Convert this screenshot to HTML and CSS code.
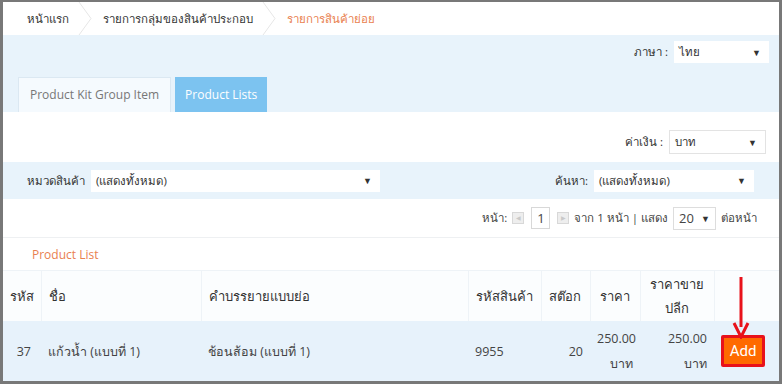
FILE: index.html
```html
<!DOCTYPE html>
<html lang="th">
<head>
    <meta charset="UTF-8">
    <title>รายการสินค้าย่อย</title>
    <link rel="stylesheet" href="styles.css">
</head>
<body>
<div class="frame">

    <!-- breadcrumb -->
    <div class="crumbs">
        <span class="crumb">หน้าแรก</span>
        <svg class="sep" width="16" height="33" viewBox="0 0 16 33"><path d="M2 0 L14 16.5 L2 33" fill="none" stroke="#e6e6e6" stroke-width="1"/></svg>
        <span class="crumb">รายการกลุ่มของสินค้าประกอบ</span>
        <svg class="sep" width="16" height="33" viewBox="0 0 16 33"><path d="M2 0 L14 16.5 L2 33" fill="none" stroke="#e6e6e6" stroke-width="1"/></svg>
        <span class="crumb active">รายการสินค้าย่อย</span>
    </div>

    <!-- language + tabs -->
    <div class="head">
        <div class="lang">
            <label>ภาษา :</label>
            <div class="sel sel-lang">ไทย <span class="caret">▼</span></div>
        </div>
        <div class="tabs">
            <div class="tab">Product Kit Group Item</div>
            <div class="tab on">Product Lists</div>
        </div>
    </div>

    <div class="currency">
        <label>ค่าเงิน :</label>
        <div class="sel sel-cur">บาท <span class="caret">▼</span></div>
    </div>

    <div class="filter">
        <div class="fgroup">
            <label>หมวดสินค้า</label>
            <div class="sel sel-cat">(แสดงทั้งหมด) <span class="caret">▼</span></div>
        </div>
        <div class="fgroup">
            <label>ค้นหา:</label>
            <div class="sel sel-find">(แสดงทั้งหมด) <span class="caret">▼</span></div>
        </div>
    </div>

    <div class="pager">
        <span>หน้า:</span>
        <span class="pbtn">&#9664;</span>
        <span class="pnum">1</span>
        <span class="pbtn">&#9654;</span>
        <span>จาก 1 หน้า | แสดง</span>
        <div class="sel sel-per">20 <span class="caret">▼</span></div>
        <span>ต่อหน้า</span>
    </div>

    <div class="list-title">Product List</div>

    <table class="grid">
        <tr>
            <th class="c-id">รหัส</th>
            <th class="c-name">ชื่อ</th>
            <th class="c-desc">คำบรรยายแบบย่อ</th>
            <th class="c-code">รหัสสินค้า</th>
            <th class="c-stock">สต๊อก</th>
            <th class="c-price">ราคา</th>
            <th class="c-retail">ราคาขาย<br>ปลีก</th>
            <th class="c-act"></th>
        </tr>
        <tr>
            <td class="num first">37</td>
            <td>แก้วน้ำ (แบบที่ 1)</td>
            <td>ช้อนส้อม (แบบที่ 1)</td>
            <td>9955</td>
            <td class="num">20</td>
            <td class="num">250.00<br>บาท</td>
            <td class="num">250.00<br>บาท</td>
            <td class="act"><span class="add">Add</span></td>
        </tr>
    </table>

    <!-- annotation arrow pointing at Add -->
    <svg class="arrow" width="20" height="62" viewBox="0 0 20 62">
        <line x1="10" y1="0" x2="10" y2="50" stroke="#e8121b" stroke-width="3"/>
        <path d="M3 46 L10 60 L17 46" fill="none" stroke="#e8121b" stroke-width="3" stroke-linejoin="miter"/>
    </svg>
</div>
</body>
</html>
```
FILE: styles.css
```css
* {
    box-sizing: border-box;
}
body {
    margin: 0;
    font-family: "Open Sans", "Noto Sans", sans-serif;
    font-size: 11.5px;
    color: #333;
    background: #fff;
}
.frame {
    position: relative;
    width: 782px;
    height: 384px;
    border: 3px solid #787878;
    border-top-width: 2px;
    overflow: hidden;
}
.crumbs {
    display: flex;
    align-items: center;
    height: 33px;
    padding-left: 24px;
    font-size: 11.5px;
}
.sep {
    margin: 0 10px 0 8px;
}
.crumb.active {
    color: #e9804f;
}
.head {
    background: #e8f3fb;
    height: 77px;
    display: flex;
    flex-direction: column;
    justify-content: space-between;
}
.lang {
    display: flex;
    justify-content: flex-end;
    align-items: center;
    padding: 6px 10px 0 0;
}
label {
    margin-right: 6px;
}
.sel {
    background: #fff;
    height: 22px;
    display: flex;
    align-items: center;
    justify-content: space-between;
    padding: 0 8px 0 5px;
    font-size: 11.5px;
}
.caret {
    font-size: 9px;
    color: #333;
}
.sel-lang { width: 95px; }
.sel-cur { width: 97px; height: 24px; border: 1px solid #e3e3e3; }
.sel-cat { width: 289px; }
.sel-find { width: 160px; }
.sel-per { width: 43px; height: 23px; border: 1px solid #ddd; padding: 0 5px; font-size: 13px; }
.tabs {
    display: flex;
    padding-left: 15px;
    gap: 4px;
}
.tab {
    height: 35px;
    line-height: 34px;
    padding: 0 11px;
    font-size: 12px;
    color: #777;
    background: #f5fafe;
    border: 1px solid #dbe8f2;
    border-bottom: none;
}
.tab.on {
    background: #7cc3f0;
    color: #fff;
    border-color: #7cc3f0;
    padding: 0 9px;
}
.currency {
    height: 50px;
    display: flex;
    justify-content: flex-end;
    align-items: center;
    padding: 10px 13px 0 0;
}
.filter {
    height: 37px;
    background: #e8f3fb;
    display: flex;
    align-items: center;
    justify-content: space-between;
    padding: 0 25px 0 24px;
}
.fgroup {
    display: flex;
    align-items: center;
}
.pager {
    height: 39px;
    display: flex;
    justify-content: flex-end;
    align-items: center;
    gap: 5px;
    padding-right: 22px;
    border-bottom: 1px solid #eef0f2;
    color: #444;
}
.pbtn {
    width: 12px;
    height: 12px;
    border: 1px solid #d8d8d8;
    background: #eee;
    color: #c9c9c9;
    font-size: 6px;
    display: flex;
    align-items: center;
    justify-content: center;
}
.pnum {
    width: 19px;
    height: 22px;
    border: 1px solid #d8d8d8;
    display: flex;
    align-items: center;
    padding-left: 5px;
    margin: 0 2px;
    font-size: 13px;
}
.list-title {
    color: #e9804f;
    font-size: 12px;
    padding: 8px 0 0 29px;
    height: 32px;
}
.grid {
    border-collapse: collapse;
    width: 776px;
    table-layout: fixed;
    font-size: 13px;
}
.grid th {
    text-align: left;
    font-weight: normal;
    color: #333;
    height: 50px;
    padding: 0 7px;
    border-top: 1px solid #eef3f7;
    border-left: 1px solid #eef3f7;
    background: #fbfdfe;
    line-height: 24px;
}
.grid th:first-child { border-left: none; }
.grid td {
    background: #e7f2fb;
    height: 61px;
    padding: 0 7px;
    line-height: 25px;
    color: #444;
    font-size: 12.5px;
}
.grid td.first {
    padding-right: 10px;
}
.c-id { width: 38px; }
.c-name { width: 160px; }
.c-desc { width: 267px; }
.c-code { width: 73px; }
.c-stock { width: 49px; }
.c-price { width: 50px; }
.c-retail { width: 74px; }
.c-act { width: 65px; }
.grid .c-price, .grid .c-retail { text-align: center; }
.num {
    text-align: right;
}
.grid .act {
    padding: 0 0 0 7px;
}
.add {
    display: inline-block;
    width: 44px;
    height: 32px;
    line-height: 26px;
    text-align: center;
    color: #fff;
    background: #ff6a00;
    border: 3px solid #e8121b;
    border-radius: 2px;
    font-family: "Liberation Sans Narrow", "Roboto", sans-serif;
    font-size: 15px;
}
.arrow {
    position: absolute;
    left: 728px;
    top: 275px;
}
```
